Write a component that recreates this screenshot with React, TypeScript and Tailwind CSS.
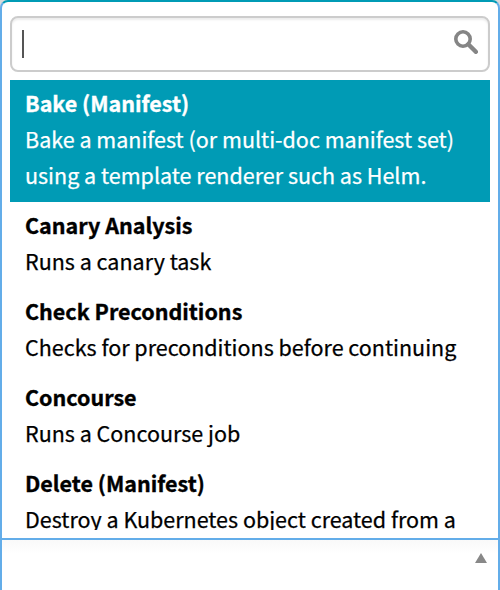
const stages: { name: string; lines: string[] }[] = [
  { name: 'Bake (Manifest)', lines: ['Bake a manifest (or multi-doc manifest set)', 'using a template renderer such as Helm.'] },
  { name: 'Canary Analysis', lines: ['Runs a canary task'] },
  { name: 'Check Preconditions', lines: ['Checks for preconditions before continuing'] },
  { name: 'Concourse', lines: ['Runs a Concourse job'] },
  { name: 'Delete (Manifest)', lines: ['Destroy a Kubernetes object created from a'] },
];

function SearchIcon() {
  return (
    <svg width="24" height="24" viewBox="0 0 24 24" fill="none" stroke="#858585">
      <circle cx="9" cy="9" r="7.2" strokeWidth="3.6" />
      <path d="M14.3 14.3 L21.8 21.8" strokeWidth="4.4" strokeLinecap="round" />
    </svg>
  );
}

function StageOption({ name, lines, active }: { name: string; lines: string[]; active: boolean }) {
  return (
    <li className={active ? 'bg-[#009bb5] px-[15px] pt-[5px] pb-[9px] text-white' : 'px-[15px] pt-[5px] pb-[9px] text-black'}>
      <div className="h-9 font-bold [-webkit-text-stroke:0.35px]">{name}</div>
      {lines.map((line) => (
        <div key={line} className="h-9 [-webkit-text-stroke:0.25px]">{line}</div>
      ))}
    </li>
  );
}

export default function App() {
  return (
    <div className="h-[590px] w-[500px] overflow-hidden bg-[#dbdbdb] font-['Noto_Sans_CJK_SC',sans-serif] text-[21.5px] leading-9">
      <div className="flex h-[600px] flex-col rounded-t-[8px] border-x-2 border-t-2 border-x-[#63ade9] border-t-[#009bb5] bg-white">
        <div className="flex h-[536px] shrink-0 flex-col px-2 pt-[14px]">
          <div className="flex h-14 shrink-0 items-start justify-between rounded-[8px] border-2 border-[#cccccc] pt-3 pr-[10px] pl-[10px] shadow-[inset_0_2px_2px_rgba(0,0,0,0.075)]">
            <span className="h-7 w-[2px] bg-[#555555]" />
            <SearchIcon />
          </div>
          <ul className="mt-2 h-[450px] shrink-0 overflow-hidden whitespace-nowrap">
            {stages.map((stage, index) => (
              <StageOption key={stage.name} {...stage} active={index === 0} />
            ))}
          </ul>
        </div>
        <div className="flex grow items-start justify-end border-t-2 border-[#63ade9] bg-linear-to-b from-[#f9f9f9] from-0% to-white to-[14px] pt-[13px] pr-[11px]">
          <svg width="12" height="10" viewBox="0 0 12 10" fill="#888888">
            <path d="M6 0 L12 10 H0 Z" />
          </svg>
        </div>
      </div>
    </div>
  );
}
